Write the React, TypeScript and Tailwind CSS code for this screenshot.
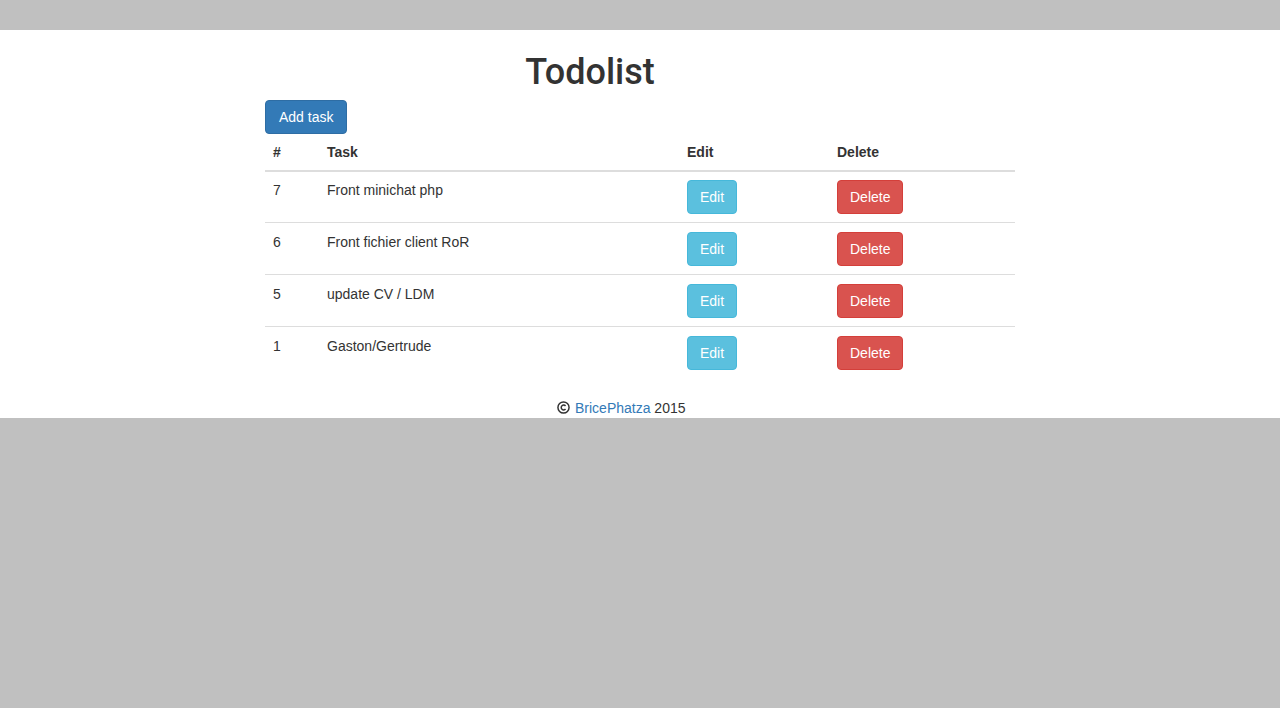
const tasks = [
  { id: 7, name: "Front minichat php" },
  { id: 6, name: "Front fichier client RoR" },
  { id: 5, name: "update CV / LDM" },
  { id: 1, name: "Gaston/Gertrude" },
];

function CopyrightMark() {
  return (
    <svg width="13" height="13" viewBox="0 0 14 14" className="inline-block align-[-1px] mr-[5px]">
      <circle cx="7" cy="7" r="6" fill="none" stroke="#333" strokeWidth="1.6" />
      <path d="M9.2 5.4 A2.6 2.6 0 1 0 9.2 8.6" fill="none" stroke="#333" strokeWidth="1.6" />
    </svg>
  );
}

export default function App() {
  return (
    <div className="min-h-[708px] bg-[#c0c0c0] font-['Liberation_Sans',Arial,sans-serif] text-[14px] leading-[20px] text-[#333]">
      <div className="h-[30px]" />
      <div className="bg-white pt-[22px]">
        <div className="ml-[265px] w-[750px]">
          <h1 className="w-[650px] text-center font-['Roboto',Arial,sans-serif] text-[36px] leading-[40px] font-medium mb-2">
            Todolist
          </h1>

          <button className="h-[34px] px-[13px] rounded border border-[#2e6da4] bg-[#337ab7] text-white">
            Add task
          </button>

          <div className="grid grid-cols-[54px_360px_150px_186px] font-bold h-[38px] items-end border-b-2 border-[#ddd]">
            <div className="px-2 pb-2">#</div>
            <div className="px-2 pb-2">Task</div>
            <div className="px-2 pb-2">Edit</div>
            <div className="px-2 pb-2">Delete</div>
          </div>

          {tasks.map((t, i) => (
            <div
              key={t.id}
              className={`grid grid-cols-[54px_360px_150px_186px] ${
                i > 0 ? "border-t border-[#ddd] h-[52px] pt-[9px] pb-[7px]" : "h-[50px] py-2"
              }`}
            >
              <div className="px-2">{t.id}</div>
              <div className="px-2">{t.name}</div>
              <div className="px-2">
                <button className="h-[34px] px-3 rounded border border-[#46b8da] bg-[#5bc0de] text-white">Edit</button>
              </div>
              <div className="px-2">
                <button className="h-[34px] px-3 rounded border border-[#d43f3a] bg-[#d9534f] text-white">Delete</button>
              </div>
            </div>
          ))}
        </div>

        <div className="mt-5 h-[20px] pl-[557px]">
          <CopyrightMark />
          <a className="text-[#337ab7]">BricePhatza</a> 2015
        </div>
      </div>
    </div>
  );
}
